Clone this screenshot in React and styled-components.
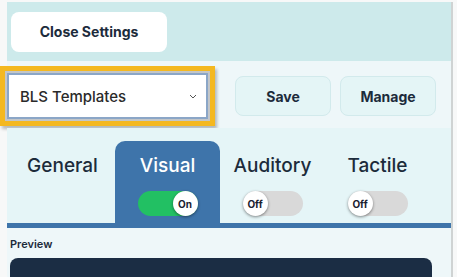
import React from 'react'
import styled, { createGlobalStyle } from 'styled-components'

const GlobalStyle = createGlobalStyle`
  body {
    margin: 0;
    background-color: #f7f8f8;
    font-family: Inter, "Open Sans", sans-serif;
    color: #1c2b3b;
  }
`;

const Page = styled.div`
  width: 453px;
  height: 277px;
  padding: 2px 0 0 7px;
  box-sizing: border-box;
  overflow: hidden;
`;

const Panel = styled.div`
  width: 446px;
  height: 275px;
  border-right: 2px solid #cfd3d3;
  box-sizing: border-box;
  display: flex;
  flex-direction: column;
`;

const TopBar = styled.div`
  height: 59px;
  background-color: #cdeaeb;
  display: flex;
  align-items: center;
  padding-left: 4px;
  flex-shrink: 0;
`;

const CloseButton = styled.button`
  width: 156px;
  height: 40px;
  border: none;
  border-radius: 8px;
  background-color: white;
  font-family: Inter, sans-serif;
  font-size: 14px;
  font-weight: 700;
  color: #1c2b3b;
`;

const ControlRow = styled.div`
  height: 67px;
  background-color: #eef7f9;
  display: flex;
  align-items: center;
  padding-top: 3px;
  box-sizing: border-box;
  flex-shrink: 0;
`;

const Select = styled.div`
  width: 201px;
  height: 46px;
  box-sizing: border-box;
  border: 2px solid #8ba6c7;
  background-color: white;
  display: flex;
  align-items: center;
  justify-content: space-between;
  padding: 0 9px 0 11px;
  font-size: 15px;
  font-weight: 500;
  color: #2a2a2a;
  outline: 5px solid #f4b820;
  outline-offset: 2px;
  box-shadow: 0 0 0 2px #c3c6c8, 2px 3px 3px 7px rgba(0, 0, 0, 0.25);
  margin-right: 27px;
`;

const ActionButton = styled.button`
  width: 96px;
  height: 40px;
  margin-right: 9px;
  border: 1px solid #d2eaec;
  border-radius: 8px;
  background-color: #e4f5f6;
  font-family: Inter, sans-serif;
  font-size: 14px;
  font-weight: 700;
  color: #1c2b3b;
`;

const TabsArea = styled.div`
  background-color: #e5f5f7;
  padding: 13px 0 0 3px;
  border-bottom: 5px solid #3e74aa;
  display: flex;
  flex-shrink: 0;
`;

const Tab = styled.div`
  width: 105px;
  height: 82px;
  border-radius: 10px 10px 0 0;
  background-color: ${p => (p.$active ? '#3e74aa' : 'transparent')};
  color: ${p => (p.$active ? 'white' : '#1c2b3b')};
  display: flex;
  flex-direction: column;
  align-items: center;
  padding-top: 13px;
  box-sizing: border-box;
  gap: 13px;
`;

const TabLabel = styled.div`
  font-size: 19px;
  font-weight: 500;
  line-height: 24px;
`;

const Toggle = styled.div`
  width: 60px;
  height: 25px;
  border-radius: 13px;
  background-color: ${p => (p.$on ? '#22c063' : '#d9d9d9')};
  display: flex;
  justify-content: ${p => (p.$on ? 'flex-end' : 'flex-start')};
`;

const Knob = styled.div`
  width: 25px;
  height: 25px;
  border-radius: 50%;
  background-color: white;
  box-shadow: 0 1px 3px rgba(0, 0, 0, 0.45);
  display: flex;
  align-items: center;
  justify-content: center;
  font-size: 10px;
  font-weight: 700;
  color: #1a2030;
`;

const PreviewArea = styled.div`
  flex: 1;
  background-color: #eef7f9;
  padding: 9px 0 0 3px;
  display: flex;
  flex-direction: column;
`;

const PreviewLabel = styled.div`
  font-size: 11px;
  font-weight: 600;
  line-height: 14px;
`;

const PreviewBox = styled.div`
  margin-top: 7px;
  width: 422px;
  flex: 1;
  border-radius: 8px 8px 0 0;
  background-color: #1b2d44;
`;

const tabs = [
  { name: 'General' },
  { name: 'Visual', toggle: true, on: true },
  { name: 'Auditory', toggle: true, on: false },
  { name: 'Tactile', toggle: true, on: false },
];

const App = () => {
  return (
    <Page>
      <GlobalStyle />
      <Panel>
        <TopBar>
          <CloseButton>Close Settings</CloseButton>
        </TopBar>
        <ControlRow>
          <Select>
            BLS Templates
            <svg width="8" height="5" viewBox="0 0 8 5">
              <path d="M1 1l3 3 3-3" fill="none" stroke="#555" strokeWidth="1" />
            </svg>
          </Select>
          <ActionButton>Save</ActionButton>
          <ActionButton>Manage</ActionButton>
        </ControlRow>
        <TabsArea>
          {tabs.map(t => (
            <Tab key={t.name} $active={t.name === 'Visual'}>
              <TabLabel>{t.name}</TabLabel>
              {t.toggle && (
                <Toggle $on={t.on}>
                  <Knob>{t.on ? 'On' : 'Off'}</Knob>
                </Toggle>
              )}
            </Tab>
          ))}
        </TabsArea>
        <PreviewArea>
          <PreviewLabel>Preview</PreviewLabel>
          <PreviewBox />
        </PreviewArea>
      </Panel>
    </Page>
  )
}

export default App
